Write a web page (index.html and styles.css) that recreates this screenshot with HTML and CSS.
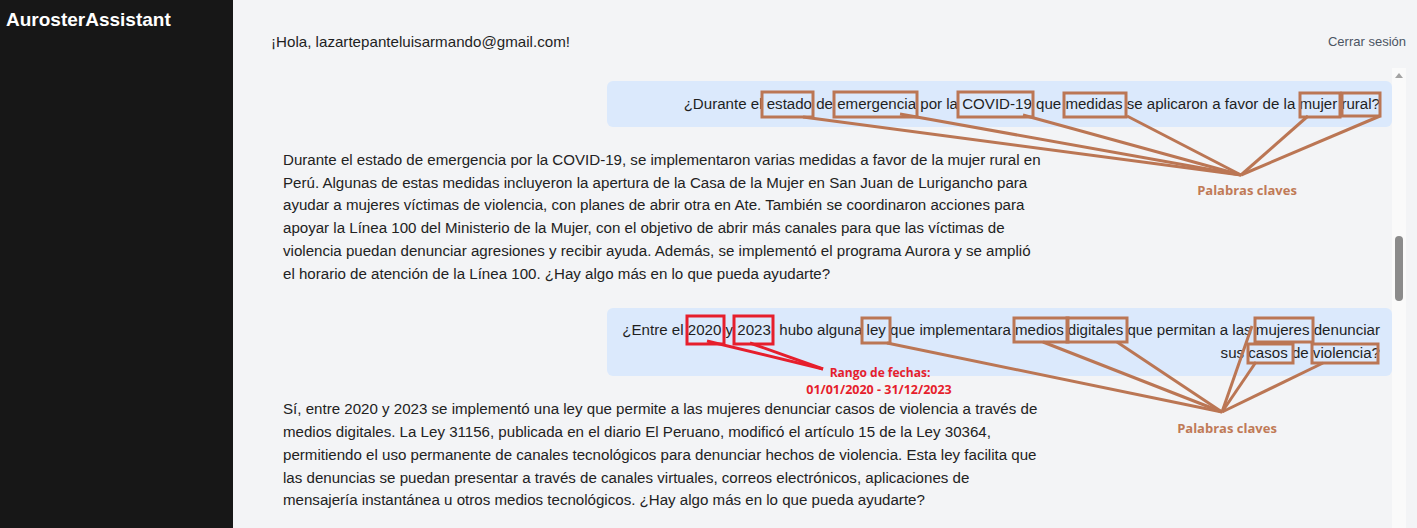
FILE: index.html
```html
<!DOCTYPE html>
<html lang="es">
<head>
<meta charset="utf-8">
<title>AurosterAssistant</title>
<link rel="stylesheet" href="styles.css">
</head>
<body>
  <aside class="sidebar">
    <h1 class="brand">AurosterAssistant</h1>
  </aside>
  <main class="main">
    <header class="topbar">
      <p class="greeting">¡Hola, lazartepanteluisarmando@gmail.com!</p>
      <a class="logout" href="#">Cerrar sesión</a>
    </header>
    <section class="chat">
      <div class="messages">
        <div class="msg msg-user">¿Durante el estado de emergencia por la COVID-19 que medidas se aplicaron a favor de la mujer rural?</div>
        <div class="msg msg-bot">Durante el estado de emergencia por la COVID-19, se implementaron varias medidas a favor de la mujer rural en Perú. Algunas de estas medidas incluyeron la apertura de la Casa de la Mujer en San Juan de Lurigancho para ayudar a mujeres víctimas de violencia, con planes de abrir otra en Ate. También se coordinaron acciones para apoyar la Línea 100 del Ministerio de la Mujer, con el objetivo de abrir más canales para que las víctimas de violencia puedan denunciar agresiones y recibir ayuda. Además, se implementó el programa Aurora y se amplió el horario de atención de la Línea 100. ¿Hay algo más en lo que pueda ayudarte?</div>
        <div class="msg msg-user">¿Entre el 2020 y 2023, hubo alguna ley que implementara medios digitales que permitan a las mujeres denunciar sus casos de violencia?</div>
        <div class="msg msg-bot">Sí, entre 2020 y 2023 se implementó una ley que permite a las mujeres denunciar casos de violencia a través de medios digitales. La Ley 31156, publicada en el diario El Peruano, modificó el artículo 15 de la Ley 30364, permitiendo el uso permanente de canales tecnológicos para denunciar hechos de violencia. Esta ley facilita que las denuncias se puedan presentar a través de canales virtuales, correos electrónicos, aplicaciones de mensajería instantánea u otros medios tecnológicos. ¿Hay algo más en lo que pueda ayudarte?</div>
      </div>
      <div class="scrollbar">
        <span class="scroll-arrow"></span>
        <span class="scroll-thumb"></span>
      </div>
    </section>
  </main>

  <svg class="annotations" width="1417" height="528" viewBox="0 0 1417 528" aria-hidden="true">
    <g class="ann-brown" fill="none" stroke-width="3">
      <rect x="762" y="92" width="51" height="25"/>
      <rect x="834" y="92" width="83" height="25"/>
      <rect x="958" y="92" width="75" height="25"/>
      <rect x="1064" y="93" width="62" height="24"/>
      <rect x="1300" y="93" width="40" height="24"/>
      <rect x="1342" y="93" width="38" height="23"/>
      <line x1="803" y1="117" x2="1241" y2="175"/>
      <line x1="900" y1="114" x2="1241" y2="175"/>
      <line x1="1023" y1="115" x2="1241" y2="175"/>
      <line x1="1127" y1="116" x2="1241" y2="175"/>
      <line x1="1308" y1="116" x2="1241" y2="175"/>
      <line x1="1380" y1="116" x2="1241" y2="175"/>

      <rect x="862" y="318" width="28" height="25"/>
      <rect x="1014" y="318" width="54" height="24"/>
      <rect x="1067" y="318" width="60" height="24"/>
      <rect x="1255" y="318" width="58" height="24"/>
      <rect x="1248" y="344" width="45" height="19"/>
      <rect x="1312" y="344" width="66" height="19"/>
      <line x1="887" y1="343" x2="1222" y2="412"/>
      <line x1="1043" y1="342" x2="1222" y2="412"/>
      <line x1="1117" y1="342" x2="1222" y2="412"/>
      <line x1="1252" y1="326" x2="1222" y2="412"/>
      <line x1="1256" y1="362" x2="1222" y2="412"/>
      <line x1="1323" y1="363" x2="1222" y2="412"/>
    </g>
    <g class="ann-red" fill="none" stroke-width="3">
      <rect x="687" y="316" width="37" height="28"/>
      <rect x="734" y="316" width="39" height="28"/>
      <line x1="707" y1="341" x2="823" y2="369"/>
      <line x1="750" y1="343" x2="823" y2="369"/>
    </g>
    <text class="ann-label ann-label-brown" x="1247" y="195" text-anchor="middle">Palabras claves</text>
    <text class="ann-label ann-label-brown" x="1227" y="433" text-anchor="middle">Palabras claves</text>
    <text class="ann-label ann-label-red" x="880" y="377" text-anchor="middle">Rango de fechas:</text>
    <text class="ann-label ann-label-red ann-label-wide" x="879" y="394" text-anchor="middle">01/01/2020 - 31/12/2023</text>
  </svg>
</body>
</html>
```

FILE: styles.css
```css
* { box-sizing: border-box; }

html, body {
  margin: 0;
  height: 528px;
}

body {
  position: relative;
  display: flex;
  overflow: hidden;
  font-family: "Liberation Sans", Arial, sans-serif;
  color: #222222;
  background: #f3f4f6;
}

.sidebar {
  width: 233px;
  flex: none;
  background: #171717;
  padding: 9px 6px;
}

.brand {
  margin: 0;
  font-size: 19px;
  line-height: 22px;
  font-weight: 700;
  color: #ffffff;
}

.main {
  flex: 1;
  min-width: 0;
  display: flex;
  flex-direction: column;
  padding: 0 11px 0 38px;
  background: #f3f4f6;
}

.topbar {
  height: 68px;
  flex: none;
  display: flex;
  align-items: center;
  justify-content: space-between;
  padding-top: 14px;
}

.greeting {
  margin: 0;
  font-size: 15.15px;
  color: #1f1f1f;
}

.logout {
  font-size: 13px;
  color: #4b5563;
  text-decoration: none;
}

.chat {
  flex: 1;
  min-height: 0;
  display: flex;
}

.messages {
  flex: 1;
  min-width: 0;
  overflow: hidden;
  display: flex;
  flex-direction: column;
  gap: 11px;
  padding-top: 13px;
}

.msg {
  font-size: 15.1px;
  line-height: 22.8px;
  padding: 11px 12px;
  border-radius: 6px;
}

.msg-user {
  align-self: flex-end;
  width: 785px;
  padding: 11.5px 12px;
  text-align: right;
  background: #dbe9fc;
  color: #1f1f1f;
}

.msg-bot {
  align-self: flex-start;
  width: 785px;
  color: #222222;
}

.scrollbar {
  width: 14px;
  flex: none;
  background: #fafafa;
  display: flex;
  flex-direction: column;
  align-items: center;
}

.scroll-arrow {
  margin-top: 5px;
  width: 0;
  height: 0;
  border-left: 4px solid transparent;
  border-right: 4px solid transparent;
  border-bottom: 5px solid #a3a3a3;
}

.scroll-thumb {
  margin-top: 158px;
  width: 8px;
  height: 65px;
  border-radius: 4px;
  background: #8b8b8b;
}

.annotations {
  position: absolute;
  top: 0;
  left: 0;
  pointer-events: none;
}

.ann-brown { stroke: #bb7654; }
.ann-red { stroke: #e61e2c; }

.ann-label {
  font-family: "Open Sans", "Noto Sans", sans-serif;
  font-weight: 700;
  font-size: 13px;
}

.ann-label-red { font-size: 12px; }
.ann-label-wide { font-size: 12.5px; }

.ann-label-brown { fill: #c07a57; }
.ann-label-red { fill: #e61e2c; }
```
